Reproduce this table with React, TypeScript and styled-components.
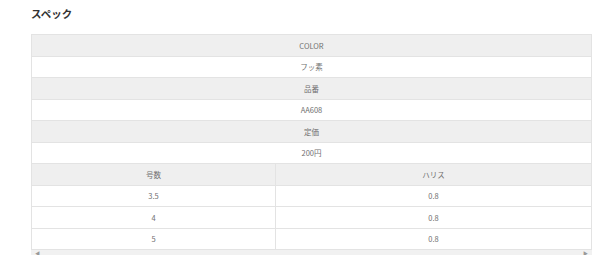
import React from "react";
import styled, { createGlobalStyle } from "styled-components";

const Global = createGlobalStyle`
  html, body { margin: 0; padding: 0; background: #fff; }
  body { font-family: "Noto Sans CJK JP", "Noto Sans", sans-serif; }
`;

const Page = styled.div`
  width: 600px;
  height: 255px;
  overflow: hidden;
  padding: 6px 8px 0 31px;
  box-sizing: border-box;
`;

const Heading = styled.h2`
  margin: 0 0 13px 0;
  font-size: 10.5px;
  line-height: 15px;
  font-weight: 700;
  color: #333;
`;

const Scroller = styled.div`
  width: 561px;
  display: flex;
  flex-direction: column;
`;

const Table = styled.div`
  border: 1px solid #e3e3e3;
  border-bottom: none;
`;

const Row = styled.div<{ $head?: boolean; $cols?: number }>`
  display: grid;
  grid-template-columns: ${(p) => (p.$cols === 2 ? "244px 1fr" : "1fr")};
  height: 21.5px;
  box-sizing: border-box;
  border-bottom: 1px solid #e3e3e3;
  background: ${(p) => (p.$head ? "#efefef" : "#fff")};
`;

const Cell = styled.div<{ $divider?: boolean }>`
  display: flex;
  align-items: center;
  justify-content: center;
  font-size: 7.5px;
  color: #707070;
  border-right: ${(p) => (p.$divider ? "1px solid #e3e3e3" : "none")};
`;

const ScrollBar = styled.div`
  height: 8px;
  background: #f1f1f1;
  display: flex;
  justify-content: space-between;
  align-items: flex-start;
  padding: 0 4px;
  font-size: 5px;
  line-height: 6px;
  color: #999;
`;

const single: { label: string; head: boolean }[] = [
  { label: "COLOR", head: true },
  { label: "フッ素", head: false },
  { label: "品番", head: true },
  { label: "AA608", head: false },
  { label: "定価", head: true },
  { label: "200円", head: false },
];

const sizes = [
  ["3.5", "0.8"],
  ["4", "0.8"],
  ["5", "0.8"],
];

export default function App() {
  return (
    <>
      <Global />
      <Page>
        <Heading>スペック</Heading>
        <Scroller>
          <Table>
            {single.map((r) => (
              <Row key={r.label} $head={r.head}>
                <Cell>{r.label}</Cell>
              </Row>
            ))}
            <Row $head $cols={2}>
              <Cell $divider>号数</Cell>
              <Cell>ハリス</Cell>
            </Row>
            {sizes.map(([a, b]) => (
              <Row key={a} $cols={2}>
                <Cell $divider>{a}</Cell>
                <Cell>{b}</Cell>
              </Row>
            ))}
          </Table>
          <ScrollBar>
            <span>◀</span>
            <span>▶</span>
          </ScrollBar>
        </Scroller>
      </Page>
    </>
  );
}
